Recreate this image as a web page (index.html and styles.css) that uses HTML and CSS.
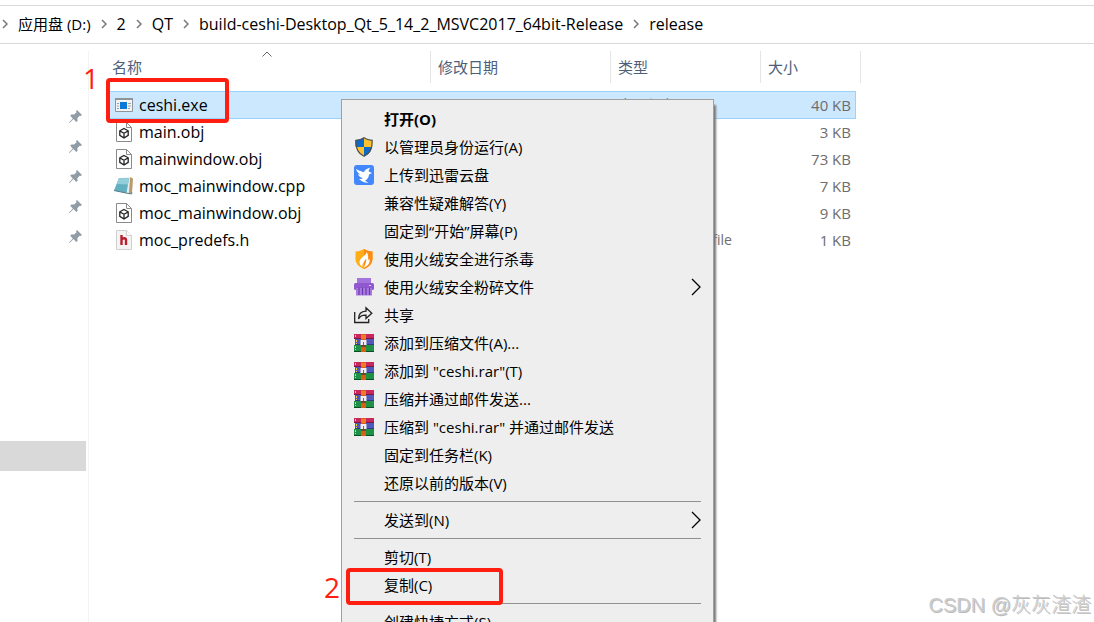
FILE: index.html
```
<!DOCTYPE html>
<html lang="zh-CN">
<head>
  <meta charset="UTF-8">
  <meta name="viewport" content="width=device-width, initial-scale=1">
  <title>release</title>
  <link rel="stylesheet" href="styles.css">
</head>
<body>
  <svg class="defs" aria-hidden="true">
    <symbol id="sep" viewBox="0 0 6 10"><path d="M1 1l4 4-4 4" fill="none" stroke="#777" stroke-width="1.5"/></symbol>
    <symbol id="pin" viewBox="0 0 13 13"><path d="M8 0l5 5-1.3 1-1-.3-2.4 2.5.3 2.6-1.4 1.1-2.7-2.8L.5 13 0 12.500l3.800-4L1.200 5.700l1.200-1.200 2.700.1 2.500-2.300L7 1z" fill="#8f9ba5"/></symbol>
    <symbol id="obj" viewBox="0 0 20 20">
      <path d="M2.500.5h10l5 5v14h-15z" fill="#fff" stroke="#8a8a8a"/>
      <path d="M12.500.5v5h5" fill="none" stroke="#8a8a8a"/>
      <path d="M10 6.500l4.200 2.300v4.600L10 16l-4.200-2.600V8.800zM6 9l4 2.300L14 9M10 11.300V16" fill="none" stroke="#222" stroke-width="1.300"/>
    </symbol>
    <symbol id="rar" viewBox="0 0 20 20">
      <path d="M0 1h20v5H0z" fill="#c9265b"/><path d="M0 5h20v1H0z" fill="#7a1840"/>
      <path d="M1 6h19v6H1z" fill="#5158bd"/><path d="M1 11h19v1H1z" fill="#34388a"/>
      <path d="M0 12h20v7H0z" fill="#1e9145"/><path d="M0 18h20v1H0z" fill="#0c4d25"/>
      <path d="M1.500 2v3M2.500 7v4M1.500 13v4" stroke="#f3d03c" stroke-dasharray="2 1"/>
      <path d="M7 1h5v18H7z" fill="#d95f14"/><path d="M7 2h5v4H7z" fill="#f07a26"/>
      <path d="M6 7h1v5H6zM12 7h1v5h-1z" fill="#9d9fd0"/>
      <path d="M7 7h5v5H7z" fill="#f4eeee"/><path d="M9 9h1v3H9z" fill="#c94231"/><path d="M7 12h5v2H7z" fill="#6a4630"/>
    </symbol>
    <symbol id="more" viewBox="0 0 10 18"><path d="M1 1l8 8-8 8" fill="none" stroke="currentColor" stroke-width="1.300"/></symbol>
  </svg>

  <nav class="address">
    <svg class="sep"><use href="#sep"/></svg><a class="drive" href="#">应用盘 (D:)</a>
    <svg class="sep"><use href="#sep"/></svg><a href="#">2</a>
    <svg class="sep"><use href="#sep"/></svg><a href="#">QT</a>
    <svg class="sep"><use href="#sep"/></svg><a href="#">build-ceshi-Desktop_Qt_5_14_2_MSVC2017_64bit-Release</a>
    <svg class="sep"><use href="#sep"/></svg><a href="#">release</a>
  </nav>

  <div class="explorer">
    <aside class="sidebar">
      <div class="pins">
        <svg><use href="#pin"/></svg>
        <svg><use href="#pin"/></svg>
        <svg><use href="#pin"/></svg>
        <svg><use href="#pin"/></svg>
        <svg><use href="#pin"/></svg>
      </div>
      <div class="current"></div>
    </aside>

    <main class="files">
      <table>
        <thead>
          <tr>
            <th class="col-name">名称<svg class="sort" viewBox="0 0 10 6"><path d="M.5 5.500L5 1l4.500 4.500" fill="none" stroke="#666"/></svg></th>
            <th class="col-date">修改日期</th>
            <th class="col-type">类型</th>
            <th class="col-size">大小</th>
            <th class="col-edge"></th>
          </tr>
        </thead>
        <tbody>
          <tr class="selected">
            <td><div class="file"><svg viewBox="0 0 20 20">
              <path d="M1.500 3.500h17v13h-17z" fill="#f4f4f4" stroke="#8d959b"/><path d="M1 3h18v2H1z" fill="#8d959b"/>
              <path d="M6 7h7v7H6z" fill="#0a78d7"/><path d="M3 8.500h2M3 11h2M3 13.500h2M14 8.500h3M14 11h3M14 13.500h2" stroke="#9aa0a5"/>
            </svg>ceshi.exe</div></td>
            <td></td><td class="type">应用程序</td><td class="size">40 KB</td><td class="edge"></td>
          </tr>
          <tr>
            <td><div class="file"><svg><use href="#obj"/></svg>main.obj</div></td>
            <td></td><td></td><td class="size">3 KB</td><td class="edge"></td>
          </tr>
          <tr>
            <td><div class="file"><svg><use href="#obj"/></svg>mainwindow.obj</div></td>
            <td></td><td></td><td class="size">73 KB</td><td class="edge"></td>
          </tr>
          <tr>
            <td><div class="file"><svg viewBox="0 0 20 20">
              <path d="M16 1l3 1.500-1 14.500-4 1z" fill="#b99a6b"/><path d="M6 2l10-1-1 16-4-1z" fill="#e4edf0"/>
              <path d="M5 2l10 .5L12.500 17 0 14.500z" fill="#62afc0"/><path d="M5 2l10 .5-1.200 6L2.500 8z" fill="#93cfda"/>
              <path d="M0 14.500L12 17l5.500 1 .5-1.500" fill="none" stroke="#547986"/>
            </svg>moc_mainwindow.cpp</div></td>
            <td></td><td></td><td class="size">7 KB</td><td class="edge"></td>
          </tr>
          <tr>
            <td><div class="file"><svg><use href="#obj"/></svg>moc_mainwindow.obj</div></td>
            <td></td><td></td><td class="size">9 KB</td><td class="edge"></td>
          </tr>
          <tr>
            <td><div class="file"><svg viewBox="0 0 20 20">
              <path d="M2.500.5h10l5 5v14h-15z" fill="#f4f4f4" stroke="#d0d0d0"/><path d="M12.500.5v5h5" fill="#fff" stroke="#d0d0d0"/>
              <path d="M7.500 5v10M7.500 10c1-2.300 4.500-2.300 4.500 0v5" fill="none" stroke="#b8202e" stroke-width="2.400"/>
            </svg>moc_predefs.h</div></td>
            <td></td><td class="type">C/C++ Header file</td><td class="size">1 KB</td><td class="edge"></td>
          </tr>
        </tbody>
      </table>
    </main>
  </div>

  <div class="menu" role="menu">
    <button class="default" type="button"><span class="icon"></span>打开(O)</button>
    <button type="button"><span class="icon"><svg viewBox="0 0 20 20">
      <path d="M10 .5c2.500 1.800 5 2.500 8.500 2.700C18.700 11 16.500 16.500 10 19.500 3.500 16.500 1.300 11 1.500 3.200 5 3 7.500 2.300 10 .5z" fill="#ffc12f"/>
      <path d="M10 .5V10H1.800C1.500 8 1.500 5 1.500 3.200 5 3 7.500 2.300 10 .5zM10 10h8.200c-1 4.500-3.500 7.500-8.200 9.500z" fill="#0d6ac8"/>
      <path d="M10 .8c2.500 1.800 5 2.400 8.200 2.600C18.500 11 16 16.300 10 19.200 4 16.300 1.500 11 1.800 3.400 5 3.200 7.500 2.600 10 .8z" fill="none" stroke="#4b5157" stroke-width="1.200"/>
    </svg></span>以管理员身份运行(A)</button>
    <button type="button"><span class="icon"><svg viewBox="0 0 20 20">
      <rect width="20" height="20" rx="3" fill="#4287fb"/>
      <path d="M2 4c3.500 1.800 6 2.800 8 3.200.5-2 2.500-3.500 6.500-4.700-1.300 1.500-1.800 2.500-1.800 4L18 8l-3 1.500c0 3-2 5-4 6.200l3.500 2c-4 .2-7-1.200-9.500-3.700 1.800 0 3.200-.4 4-1C6 12.500 4.500 11 4 9.300l2.500.2C4 8.300 2.700 6.500 2 4z" fill="#fff"/>
    </svg></span>上传到迅雷云盘</button>
    <button type="button"><span class="icon"></span>兼容性疑难解答(Y)</button>
    <button type="button"><span class="icon"></span>固定到“开始”屏幕(P)</button>
    <button type="button"><span class="icon"><svg viewBox="0 0 20 20">
      <path d="M10 0c3 1.700 5 2.200 8.500 2.500v8C18 15 15 18 10 20c-5-2-8-5-8.500-9.500v-8C5 2.200 7 1.700 10 0z" fill="#ffad17"/>
      <path d="M10 0c3 1.700 5 2.200 8.500 2.500v8C18 15 15 18 10 20z" fill="#fb8b12"/>
      <path d="M12.500 3c.5 3-6.500 5.500-7 10 0 2 1 3.500 3 4.800-.8-3.500 2-5 3.500-8 1 3-1.500 6-2 9 4-2 6.500-5 5.500-9-.5.700-.9 1-1.500 1.200.5-3 .2-6-1.500-8z" fill="#fff"/>
    </svg></span>使用火绒安全进行杀毒</button>
    <button type="button"><span class="icon"><svg viewBox="0 0 20 20">
      <path d="M3 1h14v6H3z" fill="#a274dc"/><rect y="6" width="20" height="7" rx="1.500" fill="#9159d0"/>
      <path d="M2 11h16v7.500H2z" fill="#a87ae0"/>
      <path d="M5 10.500V18M8.500 10.500V18M12 10.500V18M15.500 10.500V18" stroke="#6c3aad" stroke-width="1.200"/>
      <path d="M15 8.500h2" stroke="#e4d1fa"/>
    </svg></span>使用火绒安全粉碎文件<svg class="more"><use href="#more"/></svg></button>
    <button type="button"><span class="icon"><svg viewBox="0 0 20 20">
      <path d="M.7 7v10.500h14V14" fill="none" stroke="#222" stroke-width="1.300"/>
      <path d="M4.500 14C4.500 9 7 6.500 12 6.200V2.700l5.800 5.500-5.800 5.300v-3.300c-4-.2-6 1-7.500 3.800z" fill="none" stroke="#222" stroke-width="1.300"/>
    </svg></span>共享</button>
    <button type="button"><span class="icon"><svg><use href="#rar"/></svg></span>添加到压缩文件(A)...</button>
    <button type="button"><span class="icon"><svg><use href="#rar"/></svg></span>添加到 "ceshi.rar"(T)</button>
    <button type="button"><span class="icon"><svg><use href="#rar"/></svg></span>压缩并通过邮件发送...</button>
    <button type="button"><span class="icon"><svg><use href="#rar"/></svg></span>压缩到 "ceshi.rar" 并通过邮件发送</button>
    <button type="button"><span class="icon"></span>固定到任务栏(K)</button>
    <button type="button"><span class="icon"></span>还原以前的版本(V)</button>
    <hr>
    <button type="button"><span class="icon"></span>发送到(N)<svg class="more"><use href="#more"/></svg></button>
    <hr>
    <button type="button"><span class="icon"></span>剪切(T)</button>
    <button type="button"><span class="icon"></span>复制(C)</button>
    <hr>
    <button type="button"><span class="icon"></span>创建快捷方式(S)</button>
  </div>

  <div class="mark mark-file"></div>
  <div class="step step-file">1</div>
  <div class="mark mark-copy"></div>
  <div class="step step-copy">2</div>
  <div class="watermark">CSDN @灰灰渣渣</div>
</body>
</html>
```
FILE: styles.css
```
* {
  box-sizing: border-box;
}
body {
  position: relative;
  display: flex;
  flex-direction: column;
  height: 100vh;
  margin: 0;
  padding-top: 5px;
  overflow: hidden;
  background: #fff;
  color: #000;
  font: 15px/20px "Open Sans", "Noto Sans CJK SC", sans-serif;
}
.defs {
  position: absolute;
  width: 0;
  height: 0;
}

/* address bar */
.address {
  display: flex;
  align-items: center;
  gap: 10px;
  height: 39px;
  padding: 0 0 2px 2px;
  border-top: 1px solid #d9d9d9;
  border-bottom: 1px solid #d9d9d9;
  font-size: 16px;
  white-space: nowrap;
}
.address a {
  color: #000;
  text-decoration: none;
}
.address .drive {
  font-size: 15px;
}
.sep {
  flex: none;
  width: 6px;
  height: 10px;
}

.explorer {
  display: flex;
  flex: 1;
  padding-top: 7px;
}
.sidebar {
  flex: none;
  width: 89px;
  border-right: 1px solid #f3f3f3;
}
.pins {
  display: flex;
  flex-direction: column;
  align-items: flex-end;
  gap: 17px;
  padding: 59px 6px 0 0;
}
.pins svg {
  width: 13px;
  height: 13px;
}
.current {
  height: 30px;
  margin: 198px 2px 0 0;
  background: #d9d9d9;
}

/* file list */
.files {
  flex: 1;
  padding-left: 18px;
}
table {
  table-layout: fixed;
  width: 754px;
  border-spacing: 0;
}
th {
  height: 32px;
  padding: 0 0 0 7px;
  border-right: 1px solid #e5e5e5;
  color: #4c607a;
  font-weight: 400;
  text-align: left;
}
.col-name {
  position: relative;
  width: 324px;
  padding-left: 5px;
}
.col-date {
  width: 180px;
}
.col-type {
  width: 150px;
}
.col-size {
  width: 95px;
  border-right: 0;
}
.col-edge {
  width: 5px;
  padding: 0;
}
.sort {
  position: absolute;
  top: 0;
  left: 155px;
  width: 10px;
  height: 6px;
}
tbody::before {
  content: "";
  display: block;
  height: 8px;
}
td {
  height: 27px;
  padding: 0 0 2px 7px;
  color: #6d6d6d;
  white-space: nowrap;
}
.file {
  display: flex;
  align-items: center;
  gap: 5px;
  color: #000;
  font-size: 16px;
}
.file svg {
  width: 20px;
  height: 20px;
}
.type {
  font-size: 14px;
}
td.size {
  padding-right: 5px;
  text-align: right;
}
.selected td {
  height: 28px;
  padding-bottom: 0;
  border: solid #99d1ff;
  border-width: 1px 0;
  background: #cce8ff;
}
.selected td.size {
  border-right-width: 1px;
  padding-right: 4px;
}
.selected td.edge {
  border: 0;
  background: none;
}

/* context menu */
.menu {
  position: absolute;
  top: 99px;
  left: 341px;
  width: 373px;
  padding: 5px 12px;
  border: 1px solid #a0a0a0;
  background: #eee;
  box-shadow: 2px 6px 2px #777;
}
.menu button {
  display: flex;
  align-items: center;
  gap: 10px;
  width: 100%;
  height: 28px;
  padding: 0;
  border: 0;
  background: none;
  color: #000;
  font: inherit;
  text-align: left;
}
.menu .default {
  font-weight: 700;
}
.icon {
  flex: none;
  width: 20px;
  height: 20px;
}
.icon svg {
  display: block;
  width: 20px;
  height: 20px;
}
.more {
  width: 10px;
  height: 18px;
  margin-left: auto;
}
.menu hr {
  height: 1px;
  margin: 4px 0;
  border: 0;
  background: #919191;
}

/* step marks */
.mark {
  position: absolute;
  border: 4px solid #ff1e10;
  border-radius: 4px;
}
.mark-file {
  top: 78px;
  left: 106px;
  width: 123px;
  height: 45px;
}
.mark-copy {
  top: 568px;
  left: 346px;
  width: 157px;
  height: 37px;
}
.step {
  position: absolute;
  color: #ff1e10;
  font: 28px/32px "Open Sans", sans-serif;
}
.step-file {
  top: 62px;
  left: 83px;
}
.step-copy {
  top: 571px;
  left: 324px;
}
.watermark {
  position: absolute;
  right: 3px;
  bottom: 4px;
  color: #ccc;
  font: 300 20px/26px "Liberation Sans", "Noto Sans CJK SC", sans-serif;
  text-shadow: 1px 1px #bbb;
}
```
